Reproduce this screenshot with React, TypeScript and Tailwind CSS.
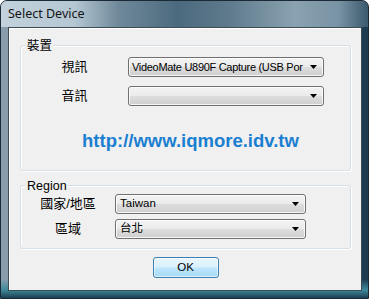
import React from 'react';

const cjk = { fontFamily: '"Liberation Sans", "Noto Sans CJK TC", sans-serif' };

const Combo = ({ value, className, textClass }: { value: string; className: string; textClass: string }) => (
  <div
    className={`relative h-[20px] rounded-[3px] border border-[#707070] bg-[linear-gradient(180deg,#f3f3f3_0%,#ebebeb_48%,#dddddd_52%,#cfcfcf_100%)] shadow-[inset_0_0_0_1px_rgba(255,255,255,0.8)] flex items-center whitespace-nowrap text-black ${className}`}
  >
    <span className={textClass}>{value}</span>
    <svg className="absolute right-[6px] top-[7px]" width="7" height="4" viewBox="0 0 7 4">
      <path d="M0 0H7L3.5 4Z" fill="#000" />
    </svg>
  </div>
);

const Group = ({ title, className, children }: { title: string; className: string; children: React.ReactNode }) => (
  <div
    className={`w-[331px] rounded-[3px] border border-[#d5dfe5] shadow-[inset_1px_1px_0_#fff,1px_1px_0_#fff] flex flex-col ${className}`}
  >
    <div className="-mt-[8px] ml-[5px] h-[16px] leading-[16px] px-[1px] w-fit bg-[#f0f0f0] text-[12.5px] text-black">
      {title}
    </div>
    {children}
  </div>
);

export default function App() {
  return (
    <div
      className="w-[369px] h-[299px] rounded-t-[7px] overflow-hidden flex flex-col border border-[#1a2a36] bg-[linear-gradient(90deg,#8a9fae_0%,#6d8596_20%,#3f5c70_50%,#2c4a60_80%,#1d3a50_100%)]"
      style={cjk}
    >
      <div className="h-[26px] shrink-0 flex items-center pl-[7px] text-[12.5px] text-[#141414] bg-[linear-gradient(90deg,#c3d2dc_0%,#b4c7d3_20%,#6f899a_32%,#4c6a7e_48%,#5e7a8c_62%,#8aa2b1_80%,#7893a4_92%,#3c5a6e_100%)]">
        <span style={{ fontFamily: '"Noto Sans", sans-serif' }}>Select Device</span>
      </div>
      <div className="flex-1 flex pl-[7px] pr-[6px] pb-[7px] bg-[linear-gradient(180deg,transparent_0%,transparent_93%,#3f8a9a_97%,#1b3f52_100%)]">
        <div className="flex-1 flex flex-col items-start bg-[#f0f0f0] border border-[#3d4b55] shadow-[inset_1px_1px_0_#ffffff]">
          <Group title="裝置" className="mt-[17px] ml-[11px] h-[126px]">
            <div className="mt-[3px] flex items-center">
              <div className="w-[107px] text-center text-[13px]">視訊</div>
              <Combo
                value="VideoMate U890F Capture (USB Por"
                className="w-[196px] pl-[3px]"
                textClass="text-[11px] tracking-[-0.3px]"
              />
            </div>
            <div className="mt-[9px] flex items-center">
              <div className="w-[107px] text-center text-[13px]">音訊</div>
              <Combo value="" className="w-[196px]" textClass="text-[11.5px]" />
            </div>
            <div className="mt-[24px] h-[22px] leading-[22px] text-center font-bold text-[18.5px] text-[#1b7fd1] pl-[10px]">
              http://www.iqmore.idv.tw
            </div>
          </Group>
          <Group title="Region" className="mt-[14px] ml-[11px] h-[64px]">
            <div className="flex items-center">
              <div className="w-[94px] text-center text-[13px]">國家/地區</div>
              <Combo value="Taiwan" className="w-[191px] pl-[4px]" textClass="text-[11.5px]" />
            </div>
            <div className="mt-[5px] flex items-center">
              <div className="w-[94px] text-center text-[13px]">區域</div>
              <Combo value="台北" className="w-[191px] pl-[4px]" textClass="text-[11.5px]" />
            </div>
          </Group>
          <button className="mt-[8px] self-center ml-[1px] w-[66px] h-[21px] rounded-[3px] border border-[#3c7fb1] bg-[linear-gradient(180deg,#eaf6fd_0%,#d9f0fc_48%,#bee6fd_52%,#a7d9f5_100%)] shadow-[inset_0_0_0_1px_rgba(255,255,255,0.6)] text-[11.5px] text-black">
            OK
          </button>
        </div>
      </div>
    </div>
  );
}
